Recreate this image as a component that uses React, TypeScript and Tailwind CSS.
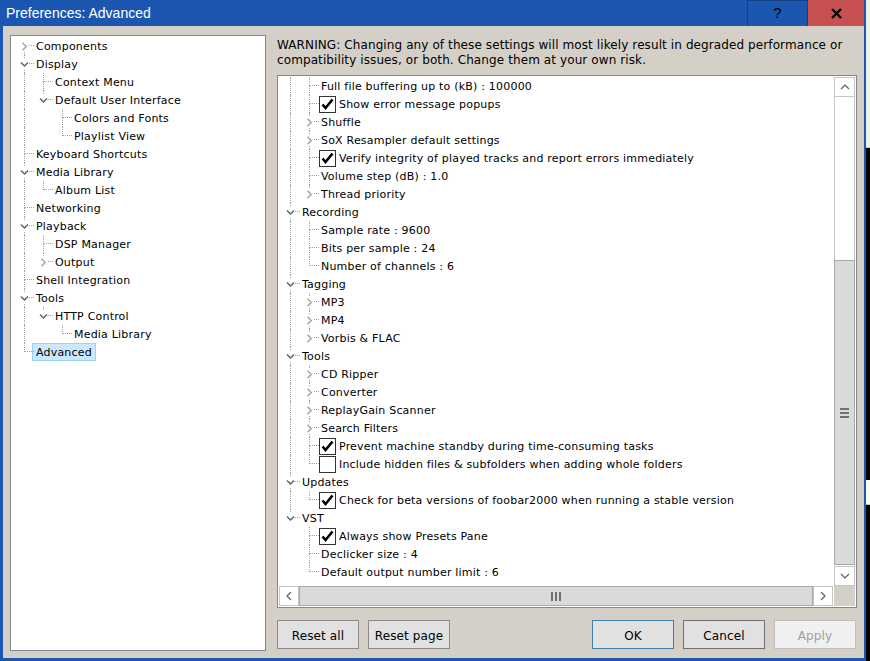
import type { ReactNode } from 'react'

type Row = {
  label: string
  guides?: boolean[]
  last?: boolean
  first?: boolean
  expander?: 'open' | 'closed'
  check?: boolean
  selected?: boolean
}

const leftRows: Row[] = [
  { label: 'Components', first: true, expander: 'closed' },
  { label: 'Display', expander: 'open' },
  { label: 'Context Menu', guides: [true] },
  { label: 'Default User Interface', guides: [true], last: true, expander: 'open' },
  { label: 'Colors and Fonts', guides: [true, false] },
  { label: 'Playlist View', guides: [true, false], last: true },
  { label: 'Keyboard Shortcuts' },
  { label: 'Media Library', expander: 'open' },
  { label: 'Album List', guides: [true], last: true },
  { label: 'Networking' },
  { label: 'Playback', expander: 'open' },
  { label: 'DSP Manager', guides: [true] },
  { label: 'Output', guides: [true], last: true, expander: 'closed' },
  { label: 'Shell Integration' },
  { label: 'Tools', expander: 'open' },
  { label: 'HTTP Control', guides: [true], last: true, expander: 'open' },
  { label: 'Media Library', guides: [true, false], last: true },
  { label: 'Advanced', last: true, selected: true },
]

const rightRows: Row[] = [
  { label: 'Full file buffering up to (kB) : 100000', guides: [true] },
  { label: 'Show error message popups', guides: [true], check: true },
  { label: 'Shuffle', guides: [true], expander: 'closed' },
  { label: 'SoX Resampler default settings', guides: [true], expander: 'closed' },
  { label: 'Verify integrity of played tracks and report errors immediately', guides: [true], check: true },
  { label: 'Volume step (dB) : 1.0', guides: [true] },
  { label: 'Thread priority', guides: [true], last: true, expander: 'closed' },
  { label: 'Recording', expander: 'open' },
  { label: 'Sample rate : 9600', guides: [true] },
  { label: 'Bits per sample : 24', guides: [true] },
  { label: 'Number of channels : 6', guides: [true], last: true },
  { label: 'Tagging', expander: 'open' },
  { label: 'MP3', guides: [true], expander: 'closed' },
  { label: 'MP4', guides: [true], expander: 'closed' },
  { label: 'Vorbis & FLAC', guides: [true], last: true, expander: 'closed' },
  { label: 'Tools', expander: 'open' },
  { label: 'CD Ripper', guides: [true], expander: 'closed' },
  { label: 'Converter', guides: [true], expander: 'closed' },
  { label: 'ReplayGain Scanner', guides: [true], expander: 'closed' },
  { label: 'Search Filters', guides: [true], expander: 'closed' },
  { label: 'Prevent machine standby during time-consuming tasks', guides: [true], check: true },
  { label: 'Include hidden files & subfolders when adding whole folders', guides: [true], last: true, check: false },
  { label: 'Updates', expander: 'open' },
  { label: 'Check for beta versions of foobar2000 when running a stable version', guides: [true], last: true, check: true },
  { label: 'VST', last: true, expander: 'open' },
  { label: 'Always show Presets Pane', guides: [false], check: true },
  { label: 'Declicker size : 4', guides: [false] },
  { label: 'Default output number limit : 6', guides: [false], last: true },
]

function Expander({ open }: { open: boolean }) {
  return (
    <span className="absolute left-[4px] top-[4px] flex size-[10px] items-center justify-center bg-white">
      {open ? (
        <svg width="9" height="7" viewBox="0 0 9 7">
          <path d="M1 1.5 L4.5 5 L8 1.5" fill="none" stroke="#626262" strokeWidth="1.5" />
        </svg>
      ) : (
        <svg width="7" height="9" viewBox="0 0 7 9">
          <path d="M1.5 0.8 L5.2 4.5 L1.5 8.2" fill="none" stroke="#a6a6a6" strokeWidth="1.5" />
        </svg>
      )}
    </span>
  )
}

function CheckBox({ checked }: { checked: boolean }) {
  return (
    <span className="mr-[2px] flex size-[17px] shrink-0 items-center justify-center border border-[#333] bg-white">
      {checked ? (
        <svg width="13" height="12" viewBox="0 0 13 12">
          <path d="M1.5 6.5 L4.5 10 L11.5 1.5" fill="none" stroke="#000" strokeWidth="2.6" />
        </svg>
      ) : null}
    </span>
  )
}

function TreeRow({ row }: { row: Row }) {
  const guides = row.guides ?? []
  return (
    <div className="flex h-[18px] items-center whitespace-nowrap">
      {guides.map((g, i) => (
        <div key={i} className="h-full w-[19px] shrink-0">
          {g ? <div className="ml-[9px] h-full border-l border-dotted border-[#a0a0a0]" /> : null}
        </div>
      ))}
      <div className="relative h-full w-[19px] shrink-0">
        <div
          className={
            row.first
              ? 'ml-[9px] h-[9px] w-[10px] border-b border-dotted border-b-[#a0a0a0]'
              : 'ml-[9px] h-[9px] w-[10px] border-b border-l border-dotted border-[#a0a0a0]'
          }
        />
        {!row.last ? <div className="ml-[9px] h-[9px] border-l border-dotted border-[#a0a0a0]" /> : null}
        {row.expander ? <Expander open={row.expander === 'open'} /> : null}
      </div>
      {row.check !== undefined ? (
        <>
          <CheckBox checked={row.check} />
          <span className="mt-[2px] pl-[1px]">{row.label}</span>
        </>
      ) : row.selected ? (
        <span className="-ml-[2px] flex h-[18px] items-center border border-[#99d1ff] bg-[#cce8ff] px-[3px] pt-[2px]">
          {row.label}
        </span>
      ) : (
        <span className="mt-[2px] pl-[2px]">{row.label}</span>
      )}
    </div>
  )
}

function Button({ children, variant }: { children: ReactNode; variant?: 'default' | 'dark' | 'disabled' }) {
  const cls =
    variant === 'default'
      ? 'border-[#3c7fb1] bg-[#e1e1e1] text-black'
      : variant === 'dark'
        ? 'border-[#707070] bg-[#e1e1e1] text-black'
        : variant === 'disabled'
          ? 'border-[#bfbfbf] bg-[#f0f0f0] text-[#a0a0a0]'
          : 'border-[#8a8a8a] bg-[#e1e1e1] text-black'
  return (
    <button
      type="button"
      className={`flex h-[29px] w-[82px] items-center justify-center border pt-[2px] text-[12px] tracking-[0.1px] ${cls}`}
    >
      {children}
    </button>
  )
}

function Chev({ dir }: { dir: 'up' | 'down' | 'left' | 'right' }) {
  const d =
    dir === 'up'
      ? 'M1 5 L5 1 L9 5'
      : dir === 'down'
        ? 'M1 1 L5 5 L9 1'
        : dir === 'left'
          ? 'M5 1 L1 5 L5 9'
          : 'M1 1 L5 5 L1 9'
  const w = dir === 'up' || dir === 'down' ? 10 : 6
  const h = dir === 'up' || dir === 'down' ? 6 : 10
  return (
    <svg width={w} height={h} viewBox={`0 0 ${w} ${h}`}>
      <path d={d} fill="none" stroke="#606060" strokeWidth="1.2" />
    </svg>
  )
}

export default function App() {
  return (
    <div className="flex h-[661px] w-[870px] overflow-hidden bg-black font-['DejaVu_Sans',sans-serif] text-[11px] tracking-[0.2px] text-black">
      <div className="flex w-[866px] shrink-0 flex-col bg-[#1b57b1]">
        {/* title bar */}
        <div className="flex h-[26px] shrink-0 items-center pr-[2px]">
          <div className="flex-1 pl-[6px] font-['Liberation_Sans',sans-serif] text-[14px] tracking-normal text-white">
            Preferences: Advanced
          </div>
          <div className="flex h-full w-[61px] items-center justify-center border border-b-0 border-[#123f85] font-['Liberation_Sans',sans-serif] text-[15px] text-black">
            ?
          </div>
          <div className="flex h-full w-[56px] items-center justify-center bg-[#c75050]">
            <svg width="11" height="11" viewBox="0 0 11 11">
              <path d="M1 1 L10 10 M10 1 L1 10" stroke="#000" strokeWidth="2.4" />
            </svg>
          </div>
        </div>

        {/* body */}
        <div className="mb-[3px] ml-[3px] mr-[2px] flex flex-1 gap-[11px] bg-[#d4d0c8] pb-[7px] pl-[7px] pr-[7px] pt-[9px]">
          <div className="w-[256px] shrink-0 overflow-hidden border border-[#828790] bg-white pl-[4px] pt-[1px]">
            {leftRows.map((row, i) => (
              <TreeRow key={i} row={row} />
            ))}
          </div>

          <div className="flex w-[580px] flex-col">
            <p className="mt-[3px] whitespace-nowrap text-[12px] leading-[15px] tracking-[0.1px]">
              WARNING: Changing any of these settings will most likely result in degraded performance or
              <br />
              compatibility issues, or both. Change them at your own risk.
            </p>

            <div className="mt-[7px] flex h-[533px] flex-col border border-[#828790] bg-white p-[1px]">
              <div className="flex h-[509px]">
                <div className="flex-1 overflow-hidden pl-[2px]">
                  {rightRows.map((row, i) => (
                    <TreeRow key={i} row={row} />
                  ))}
                </div>
                <div className="flex w-[21px] flex-col">
                  <div className="flex h-[20px] items-center justify-center border border-[#c4c4c4] bg-white">
                    <Chev dir="up" />
                  </div>
                  <div className="h-[163px] border-x border-[#c4c4c4] bg-white" />
                  <div className="flex flex-1 items-center justify-center border border-[#a8a8a8] bg-[#dadada]">
                    <div className="flex w-[9px] flex-col gap-[2px]">
                      <div className="h-[2px] bg-[#707070]" />
                      <div className="h-[2px] bg-[#707070]" />
                      <div className="h-[2px] bg-[#707070]" />
                    </div>
                  </div>
                  <div className="mt-[1px] flex h-[20px] items-center justify-center border border-[#c4c4c4] bg-white">
                    <Chev dir="down" />
                  </div>
                </div>
              </div>
              <div className="flex h-[20px]">
                <div className="flex w-[20px] items-center justify-center border border-[#c4c4c4] bg-white">
                  <Chev dir="left" />
                </div>
                <div className="flex w-[514px] items-center justify-center border border-[#a8a8a8] bg-[#dadada]">
                  <div className="flex h-[9px] gap-[2px]">
                    <div className="w-[2px] bg-[#707070]" />
                    <div className="w-[2px] bg-[#707070]" />
                    <div className="w-[2px] bg-[#707070]" />
                  </div>
                </div>
                <div className="flex w-[20px] items-center justify-center border border-[#c4c4c4] bg-white">
                  <Chev dir="right" />
                </div>
                <div className="ml-[1px] flex-1 bg-[#d4d0c8]" />
              </div>
            </div>

            <div className="mt-[12px] flex pr-[1px]">
              <div className="flex gap-[9px]">
                <Button>Reset all</Button>
                <Button>Reset page</Button>
              </div>
              <div className="ml-auto flex gap-[9px]">
                <Button variant="default">OK</Button>
                <Button variant="dark">Cancel</Button>
                <Button variant="disabled">Apply</Button>
              </div>
            </div>
          </div>
        </div>
      </div>

      {/* edge of the window behind */}
      <div className="flex w-[4px] flex-col">
        <div className="h-[148px] border-b border-[#c8c8c8] bg-[#f0f0f0]" />
        <div className="h-[332px] bg-black" />
        <div className="h-[25px] border-b border-[#c0c0c0] bg-white" />
        <div className="flex-1 bg-black" />
      </div>
    </div>
  )
}
